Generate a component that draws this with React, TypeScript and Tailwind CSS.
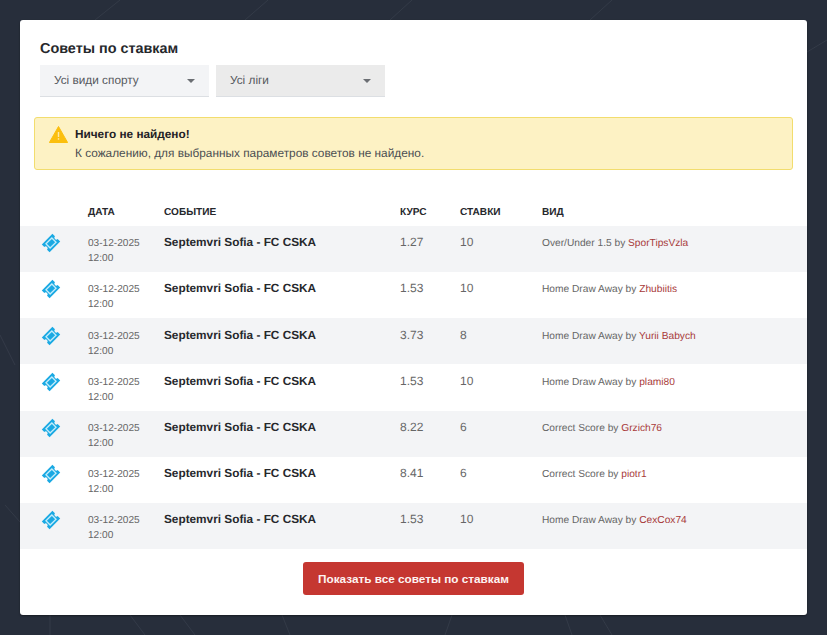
const tips = [
  { odds: '1.27', stakes: '10', kind: 'Over/Under 1.5', author: 'SporTipsVzla' },
  { odds: '1.53', stakes: '10', kind: 'Home Draw Away', author: 'Zhubiitis' },
  { odds: '3.73', stakes: '8', kind: 'Home Draw Away', author: 'Yurii Babych' },
  { odds: '1.53', stakes: '10', kind: 'Home Draw Away', author: 'plami80' },
  { odds: '8.22', stakes: '6', kind: 'Correct Score', author: 'Grzich76' },
  { odds: '8.41', stakes: '6', kind: 'Correct Score', author: 'piotr1' },
  { odds: '1.53', stakes: '10', kind: 'Home Draw Away', author: 'CexCox74' },
];

const TicketIcon = () => (
  <svg width="20" height="20" viewBox="0 0 20 20" className="block">
    <g transform="rotate(-45 10 10)">
      <path d="M2.5 4.5h15v3.6a1.9 1.9 0 0 0 0 3.8v3.6h-15v-3.6a1.9 1.9 0 0 0 0-3.8z" fill="#1aa9e3" />
      <rect x="5.2" y="6.4" width="9.6" height="7.2" fill="#c4ecfb" />
      <rect x="6.5" y="7.7" width="7" height="4.6" fill="#1aa9e3" />
    </g>
  </svg>
);

const WarningIcon = () => (
  <svg width="19" height="17" viewBox="0 0 19 17" className="ml-[1px] mr-[-1px] block">
    <path d="M9.5 0.5 18.6 16.5H0.4z" fill="#fbbf0e" stroke="#fbbf0e" strokeLinejoin="round" />
    <rect x="8.8" y="6" width="1.4" height="5" fill="#fde9a8" />
    <rect x="8.8" y="12.2" width="1.4" height="1.5" fill="#fde9a8" />
  </svg>
);

const Select = ({ label, active }: { label: string; active?: boolean }) => (
  <div
    className={`flex h-8 w-[169px] items-center justify-between border-b border-[#dcdfe3] pl-[14px] pr-[14px] text-[11.8px] text-[#55585d] ${
      active ? 'bg-[#ebebeb]' : 'bg-[#f3f4f6]'
    }`}
  >
    <span>{label}</span>
    <svg width="8" height="4" viewBox="0 0 8 4">
      <path d="M0 0h8L4 4z" fill="#6b6e73" />
    </svg>
  </div>
);

export default function App() {
  return (
    <div className="relative h-[635px] w-[827px] overflow-hidden bg-[#272e3b] p-5 font-['Liberation_Sans',sans-serif] [text-rendering:geometricPrecision]">
      {/* faint background lines */}
      <svg className="absolute inset-0" width="827" height="635" fill="none" stroke="#343b48" strokeWidth="1">
        <path d="M95 20 120 0M245 20 268 0M390 20 412 0M590 20 612 0" />
        <path d="M0 335 15 365M5 505 20 522M50 615 50 635M130 615 145 635M180 615 195 635M282 615 290 635M452 615 445 635M565 615 572 635M600 615 612 635" />
        <path d="M807 52 827 40" />
      </svg>

      <div className="relative flex h-[595px] w-[787px] flex-col rounded-[3px] bg-white shadow-[0_1px_2px_rgba(0,0,0,0.4)]">
        <h2 className="ml-5 mt-5 text-[14.4px] font-bold leading-[18px] text-[#26282c]">Советы по ставкам</h2>

        <div className="ml-5 mt-[7px] flex gap-[7px]">
          <Select label="Усі види спорту" />
          <Select label="Усі ліги" active />
        </div>

        <div className="ml-[14px] mt-[20px] flex h-[53px] w-[759px] items-start gap-2 rounded-[3px] border border-[#f2dd6e] bg-[#fdf2c4] pl-[13px] pt-[8px]">
          <WarningIcon />
          <div className="-mt-[1px]">
            <p className="text-[11.8px] font-bold leading-[18px] text-[#1f2125]">Ничего не найдено!</p>
            <p className="mt-[1px] text-[11.83px] leading-[18px] text-[#4b4e52]">
              К сожалению, для выбранных параметров советов не найдено.
            </p>
          </div>
        </div>

        <div className="mt-[34px] grid h-[22px] grid-cols-[68px_76px_236px_60px_82px_1fr] text-[10.1px] font-bold leading-[18px] text-[#26282c]">
          <span />
          <span>ДАТА</span>
          <span>СОБЫТИЕ</span>
          <span>КУРС</span>
          <span>СТАВКИ</span>
          <span>ВИД</span>
        </div>

        <div>
          {tips.map((tip, i) => (
            <div
              key={i}
              className={`grid h-[46.15px] grid-cols-[68px_76px_236px_60px_82px_1fr] pt-[8.3px] ${
                i % 2 === 0 ? 'bg-[#f3f4f6]' : 'bg-white'
              }`}
            >
              <span className="-mt-[1px] pl-[21px]">
                <TicketIcon />
              </span>
              <span className="pt-[2px] text-[10.1px] leading-[15px] text-[#666666]">
                03-12-2025
                <br />
                12:00
              </span>
              <span className="text-[11.8px] font-bold leading-[16px] text-[#26282c]">Septemvri Sofia - FC CSKA</span>
              <span className="text-xs leading-[16px] text-[#666666]">{tip.odds}</span>
              <span className="text-xs leading-[16px] text-[#666666]">{tip.stakes}</span>
              <span className="pt-[2px] text-[10.2px] leading-[16px] text-[#666666]">
                {tip.kind} by <span className="text-[#a83a3a]">{tip.author}</span>
              </span>
            </div>
          ))}
        </div>

        <div className="mt-[13px] flex justify-center">
          <button className="h-[33px] w-[221px] rounded-[3px] bg-[#c53731] text-[11.75px] font-bold text-[#fdf3f2]">
            Показать все советы по ставкам
          </button>
        </div>
      </div>
    </div>
  );
}
